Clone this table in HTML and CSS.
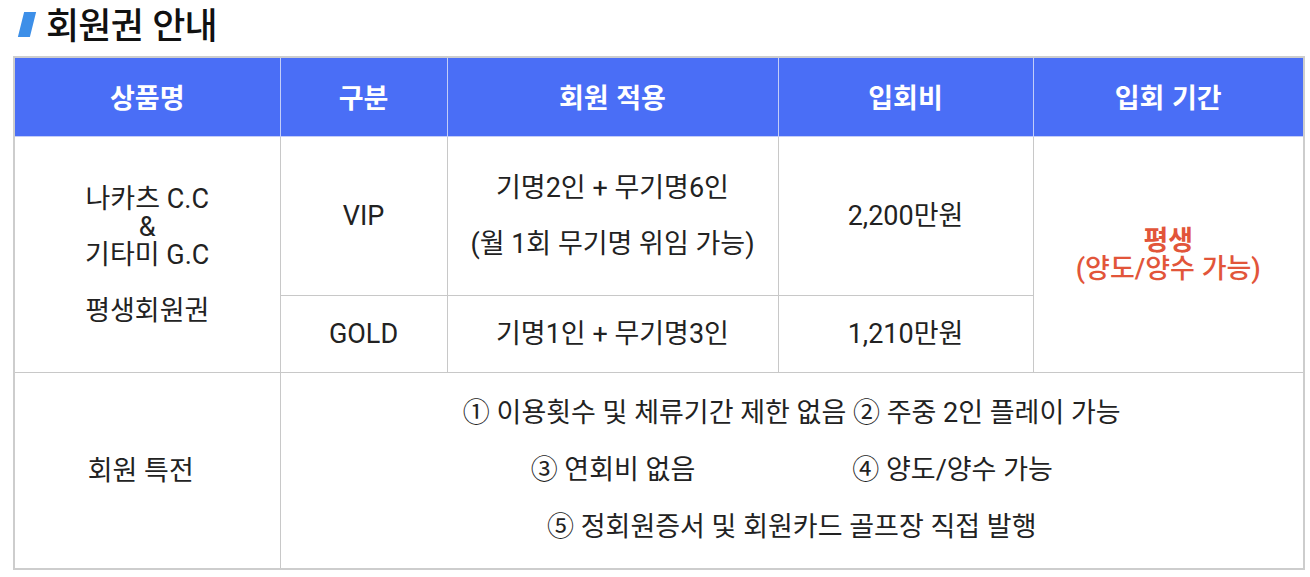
FILE: index.html
```html
<!DOCTYPE html>
<html lang="ko">
<head>
<meta charset="utf-8">
<link rel="stylesheet" href="styles.css">
</head>
<body>
<div class="page">
  <h2 class="title"><span class="bar"></span><span class="title-text">회원권 안내</span></h2>
  <table class="membership">
    <colgroup>
      <col class="c1"><col class="c2"><col class="c3"><col class="c4"><col class="c5">
    </colgroup>
    <thead>
      <tr>
        <th>상품명</th>
        <th>구분</th>
        <th>회원 적용</th>
        <th>입회비</th>
        <th>입회 기간</th>
      </tr>
    </thead>
    <tbody>
      <tr class="r1">
        <td rowspan="2">나카츠 C.C<br>&amp;<br>기타미 G.C<br><br>평생회원권</td>
        <td>VIP</td>
        <td>기명2인 + 무기명6인<br><br>(월 1회 무기명 위임 가능)</td>
        <td>2,200만원</td>
        <td rowspan="2" class="period"><span class="strong">평생</span><br>(양도/양수 가능)</td>
      </tr>
      <tr class="r2">
        <td>GOLD</td>
        <td>기명1인 + 무기명3인</td>
        <td>1,210만원</td>
      </tr>
      <tr class="r3">
        <td class="perk-label">회원 특전</td>
        <td colspan="4" class="benefits">
          <div class="line">① 이용횟수 및 체류기간 제한 없음 ② 주중 2인 플레이 가능</div>
          <div class="line"><span>③ 연회비 없음</span><span class="gap">④ 양도/양수 가능</span></div>
          <div class="line">⑤ 정회원증서 및 회원카드 골프장 직접 발행</div>
        </td>
      </tr>
    </tbody>
  </table>
</div>
</body>
</html>
```
FILE: styles.css
```css
html, body {
  margin: 0;
  padding: 0;
  background: #ffffff;
}
body {
  font-family: "Roboto", "Noto Sans CJK KR", sans-serif;
  color: #222222;
}
.page {
  padding: 0 7px 0 13px;
}
.title {
  display: flex;
  align-items: center;
  margin: 0;
  height: 46px;
  padding-bottom: 10px;
  box-sizing: content-box;
  font-family: "Noto Sans CJK KR", sans-serif;
  font-size: 36px;
  line-height: 1;
  font-weight: 500;
  color: #111111;
  letter-spacing: -0.8px;
}
.title-text {
  line-height: 1;
}
.bar {
  display: inline-block;
  width: 12px;
  height: 25px;
  margin: 2px 13px 0 8px;
  background: #3d8fe8;
  transform: skewX(-14deg);
}
.membership {
  width: 1290px;
  border-collapse: collapse;
  table-layout: fixed;
  border: 2px solid #cdcdcd;
  font-size: 27px;
  line-height: 28px;
}
.c1 { width: 266px; }
.c2 { width: 167px; }
.c3 { width: 331px; }
.c4 { width: 255px; }
.c5 { width: 271px; }
.membership th {
  height: 78px;
  padding: 0;
  background: #4a6ef6;
  color: #ffffff;
  font-family: "Noto Sans CJK KR", sans-serif;
  font-size: 27px;
  font-weight: 700;
  border: 1px solid #c3cdf8;
  border-top: 0;
  text-align: center;
  vertical-align: middle;
}
.membership td {
  padding: 0;
  border: 1px solid #c8c8c8;
  text-align: center;
  vertical-align: middle;
}
.r1 td { height: 158px; }
.r2 td { height: 76px; }
.r3 td { height: 195px; }
.perk-label {
  padding-right: 13px !important;
}
.period {
  color: #e2553a;
  font-weight: 500;
}
.period .strong {
  font-weight: 700;
}
.benefits .line {
  line-height: 57px;
  white-space: nowrap;
}
.benefits .gap {
  margin-left: 157px;
}
```
